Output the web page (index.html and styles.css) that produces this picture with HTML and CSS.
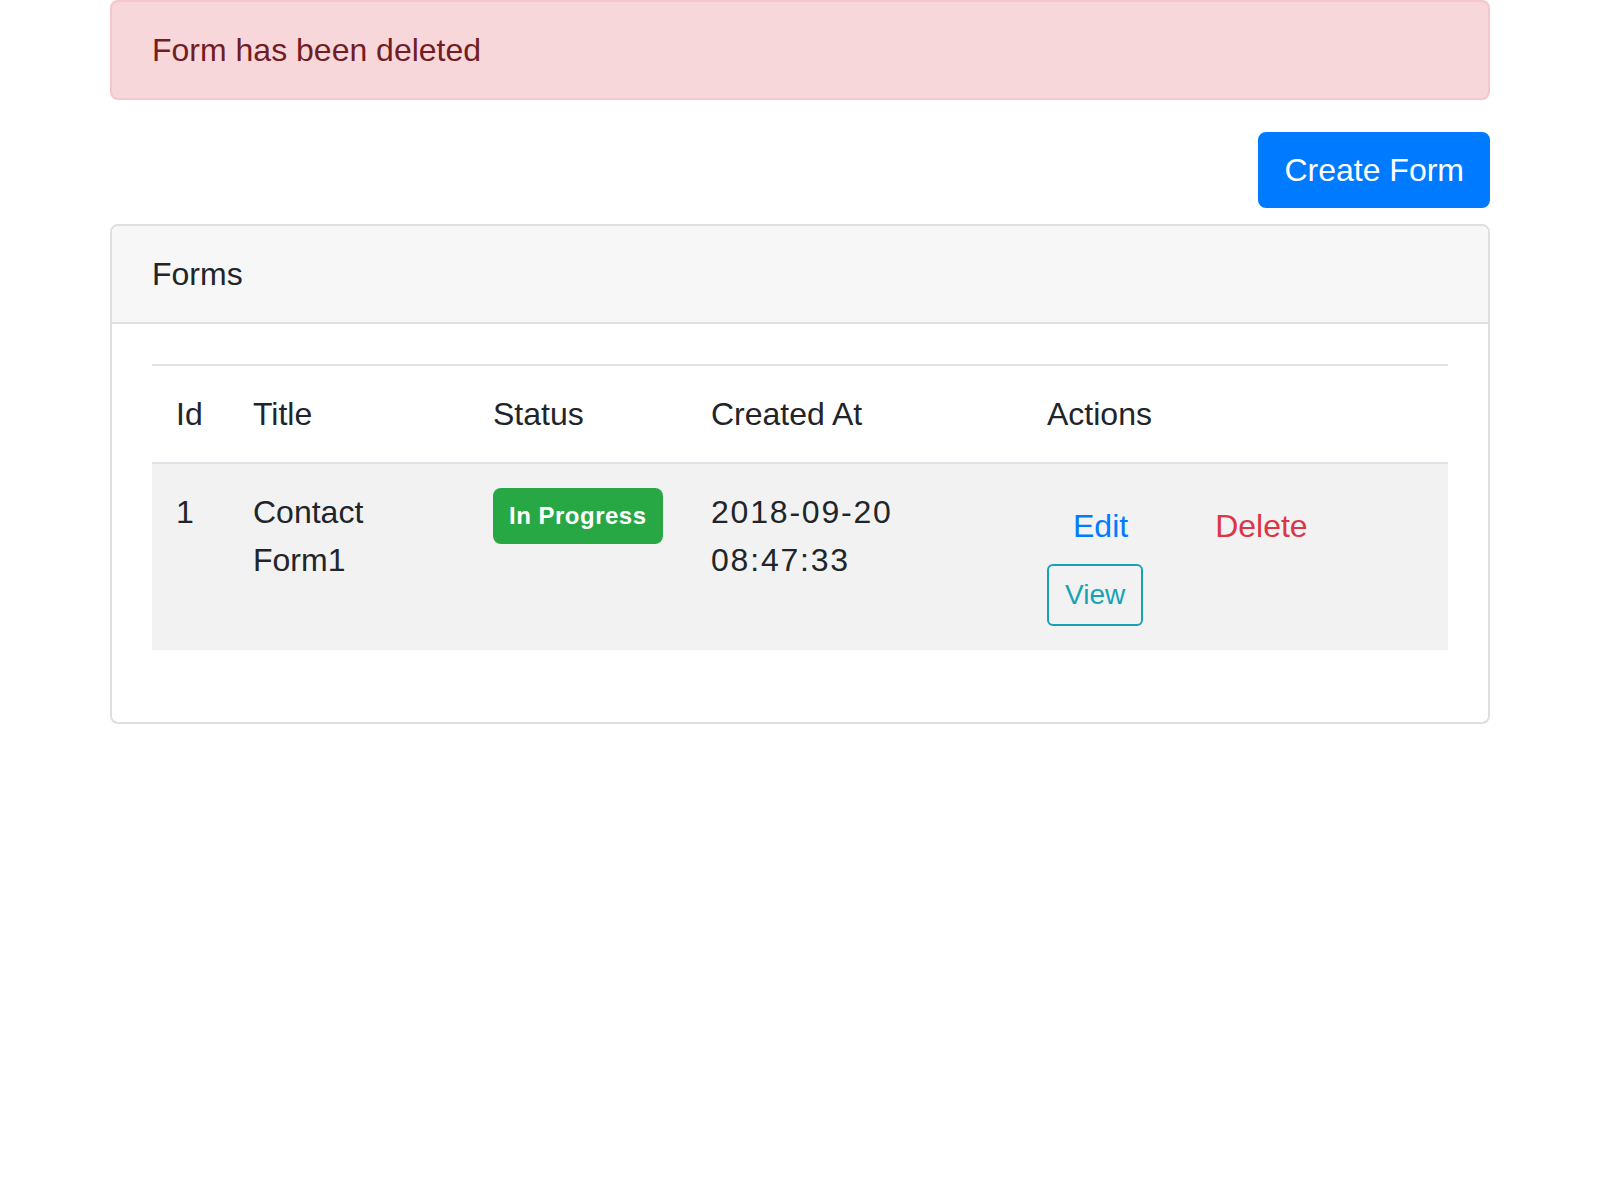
FILE: index.html
```html
<!DOCTYPE html>
<html lang="en">
<head>
<meta charset="utf-8">
<title>Forms</title>
<link rel="stylesheet" href="styles.css">
</head>
<body>
<div class="container">
  <div class="alert">Form has been deleted</div>
  <div class="toolbar">
    <a class="btn btn-primary" href="#">Create Form</a>
  </div>
  <div class="card">
    <div class="card-header">Forms</div>
    <div class="card-body">
      <table class="table">
        <colgroup>
          <col class="c-id">
          <col class="c-title">
          <col class="c-status">
          <col class="c-created">
          <col class="c-actions">
        </colgroup>
        <thead>
          <tr>
            <th>Id</th>
            <th>Title</th>
            <th>Status</th>
            <th>Created At</th>
            <th>Actions</th>
          </tr>
        </thead>
        <tbody>
          <tr class="striped">
            <td>1</td>
            <td>Contact Form1</td>
            <td><span class="badge">In Progress</span></td>
            <td class="date">2018-09-20 08:47:33</td>
            <td>
              <div class="actions">
                <a class="btn btn-link" href="#">Edit</a>
                <button class="btn btn-link text-danger" type="button">Delete</button>
              </div>
              <a class="btn btn-sm btn-outline-info" href="#">View</a>
            </td>
          </tr>
        </tbody>
      </table>
    </div>
  </div>
</div>
</body>
</html>
```

FILE: styles.css
```css
* { box-sizing: border-box; }

html, body {
  margin: 0;
  padding: 0;
  background: #fff;
}

body {
  font-family: "Liberation Sans", Arial, sans-serif;
  font-size: 32px;
  line-height: 48px;
  color: #212529;
}

.container {
  width: 1440px;
  margin: 0 auto;
  padding: 0 30px;
}

.alert {
  background: #f8d7da;
  border: 2px solid #f5c6cb;
  color: #721c24;
  border-radius: 8px;
  padding: 24px 40px;
  margin-bottom: 32px;
}

.toolbar {
  display: flex;
  justify-content: flex-end;
  margin-bottom: 16px;
}

.btn {
  display: inline-block;
  font-family: inherit;
  font-size: 32px;
  line-height: 48px;
  padding: 12px 24px;
  border: 2px solid transparent;
  border-radius: 8px;
  text-decoration: none;
  background: transparent;
  cursor: pointer;
  vertical-align: middle;
}

.btn-primary {
  background: #007bff;
  border-color: #007bff;
  color: #fff;
}

.btn-link {
  color: #007bff;
}

.text-danger {
  color: #dc3545;
}

.btn-sm {
  font-size: 28px;
  line-height: 42px;
  padding: 8px 16px;
  border-radius: 6px;
}

.btn-outline-info {
  color: #17a2b8;
  border-color: #17a2b8;
}

.card {
  border: 2px solid #dfdfdf;
  border-radius: 8px;
  overflow: hidden;
}

.card-header {
  background: #f7f7f7;
  border-bottom: 2px solid #dfdfdf;
  padding: 24px 40px;
}

.card-body {
  padding: 40px;
}

.table {
  width: 100%;
  border-collapse: collapse;
  table-layout: fixed;
  margin-bottom: 32px;
}

.c-id { width: 77px; }
.c-title { width: 240px; }
.c-status { width: 218px; }
.c-created { width: 336px; }
.c-actions { width: 425px; }

.table th,
.table td {
  padding: 24px;
  text-align: left;
  vertical-align: top;
  font-weight: 400;
  border-top: 2px solid #dee2e6;
}

.striped td {
  background: #f2f2f2;
}

.date {
  letter-spacing: 1.8px;
}

.badge {
  display: inline-block;
  background: #28a745;
  color: #fff;
  font-size: 24px;
  font-weight: 700;
  line-height: 24px;
  letter-spacing: 0.5px;
  padding: 16px;
  border-radius: 8px;
  vertical-align: top;
}

.actions {
  display: flex;
  gap: 35px;
}
```
